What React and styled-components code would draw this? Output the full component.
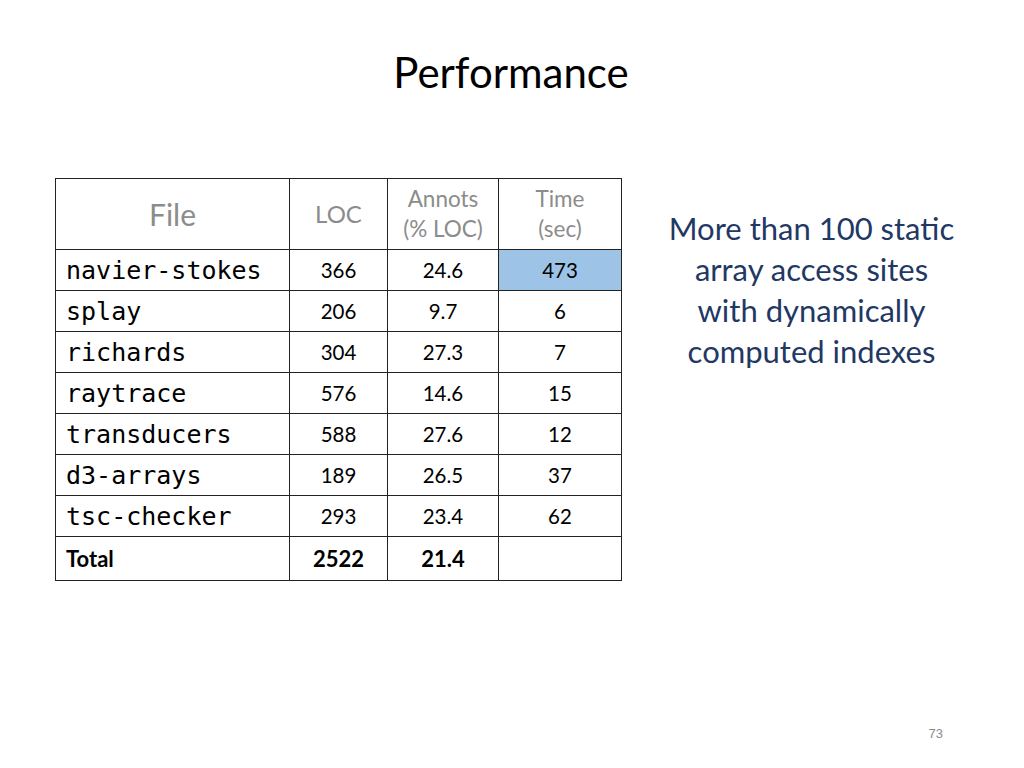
import React from "react";
import styled, { createGlobalStyle } from "styled-components";

const GlobalStyle = createGlobalStyle`
  html, body {
    margin: 0;
    padding: 0;
    background: #fff;
  }
  body {
    font-family: Lato, "Liberation Sans", sans-serif;
  }
`;

const rows = [
  { file: "navier-stokes", loc: "366", annots: "24.6", time: "473", hot: true },
  { file: "splay", loc: "206", annots: "9.7", time: "6" },
  { file: "richards", loc: "304", annots: "27.3", time: "7" },
  { file: "raytrace", loc: "576", annots: "14.6", time: "15" },
  { file: "transducers", loc: "588", annots: "27.6", time: "12" },
  { file: "d3-arrays", loc: "189", annots: "26.5", time: "37" },
  { file: "tsc-checker", loc: "293", annots: "23.4", time: "62" },
];

const App = () => {
  return (
    <Slide>
      <GlobalStyle />
      <Title>Performance</Title>
      <Body>
        <Table>
          <colgroup>
            <col style={{ width: 234 }} />
            <col style={{ width: 98 }} />
            <col style={{ width: 111 }} />
            <col style={{ width: 123 }} />
          </colgroup>
          <thead>
            <tr>
              <HeadCell size={30}>File</HeadCell>
              <HeadCell size={24}>LOC</HeadCell>
              <HeadCell size={22.5}>Annots<br />(% LOC)</HeadCell>
              <HeadCell size={22.5}>Time<br />(sec)</HeadCell>
            </tr>
          </thead>
          <tbody>
            {rows.map((r) => (
              <tr key={r.file}>
                <FileCell>{r.file}</FileCell>
                <NumCell>{r.loc}</NumCell>
                <NumCell>{r.annots}</NumCell>
                <NumCell hot={r.hot ? 1 : 0}>{r.time}</NumCell>
              </tr>
            ))}
            <TotalRow>
              <TotalCell align="left">Total</TotalCell>
              <TotalCell>2522</TotalCell>
              <TotalCell>21.4</TotalCell>
              <TotalCell></TotalCell>
            </TotalRow>
          </tbody>
        </Table>
        <Note>
          More than 100 static
          <br />
          array access sites
          <br />
          with dynamically
          <br />
          computed indexes
        </Note>
      </Body>
      <PageNum>73</PageNum>
    </Slide>
  );
};

const Slide = styled.div`
  position: relative;
  width: 1024px;
  height: 768px;
  overflow: hidden;
  background: #fff;
`;

const Title = styled.h1`
  margin: 0;
  padding-top: 47px;
  font-size: 42px;
  line-height: 50px;
  font-weight: 400;
  text-align: center;
  color: #000;
  padding-right: 2px;
`;

const Body = styled.div`
  display: flex;
  align-items: flex-start;
  padding: 81px 23px 0 55px;
`;

const Table = styled.table`
  border-collapse: collapse;
  table-layout: fixed;
  width: 566px;
  flex: none;

  td, th {
    border: 1px solid #222;
    padding: 0;
  }
`;

const HeadCell = styled.th`
  height: 70px;
  font-weight: 400;
  font-size: ${(p) => p.size}px;
  line-height: 30px;
  color: #8c8c8c;
  text-align: center;
`;

const FileCell = styled.td`
  height: 40px;
  padding-left: 10px !important;
  font-family: "DejaVu Sans Mono", "Liberation Mono", monospace;
  font-size: 25px;
  color: #000;
`;

const NumCell = styled.td`
  height: 40px;
  text-align: center;
  font-size: 20.5px;
  color: #000;
  background: ${(p) => (p.hot ? "#9dc3e6" : "transparent")};
`;

const TotalRow = styled.tr`
  td {
    height: 43px;
  }
`;

const TotalCell = styled.td`
  text-align: ${(p) => p.align || "center"};
  padding-left: ${(p) => (p.align === "left" ? "10px" : "0")} !important;
  font-size: 22px;
  font-weight: 700;
  color: #000;
`;

const Note = styled.div`
  flex: 1;
  padding-top: 30px;
  text-align: center;
  font-size: 31px;
  line-height: 41px;
  color: #1f3864;
`;

const PageNum = styled.div`
  position: absolute;
  right: 81px;
  bottom: 27px;
  font-family: "Liberation Sans", Arial, sans-serif;
  font-size: 13px;
  color: #8c8c8c;
`;

export default App;
